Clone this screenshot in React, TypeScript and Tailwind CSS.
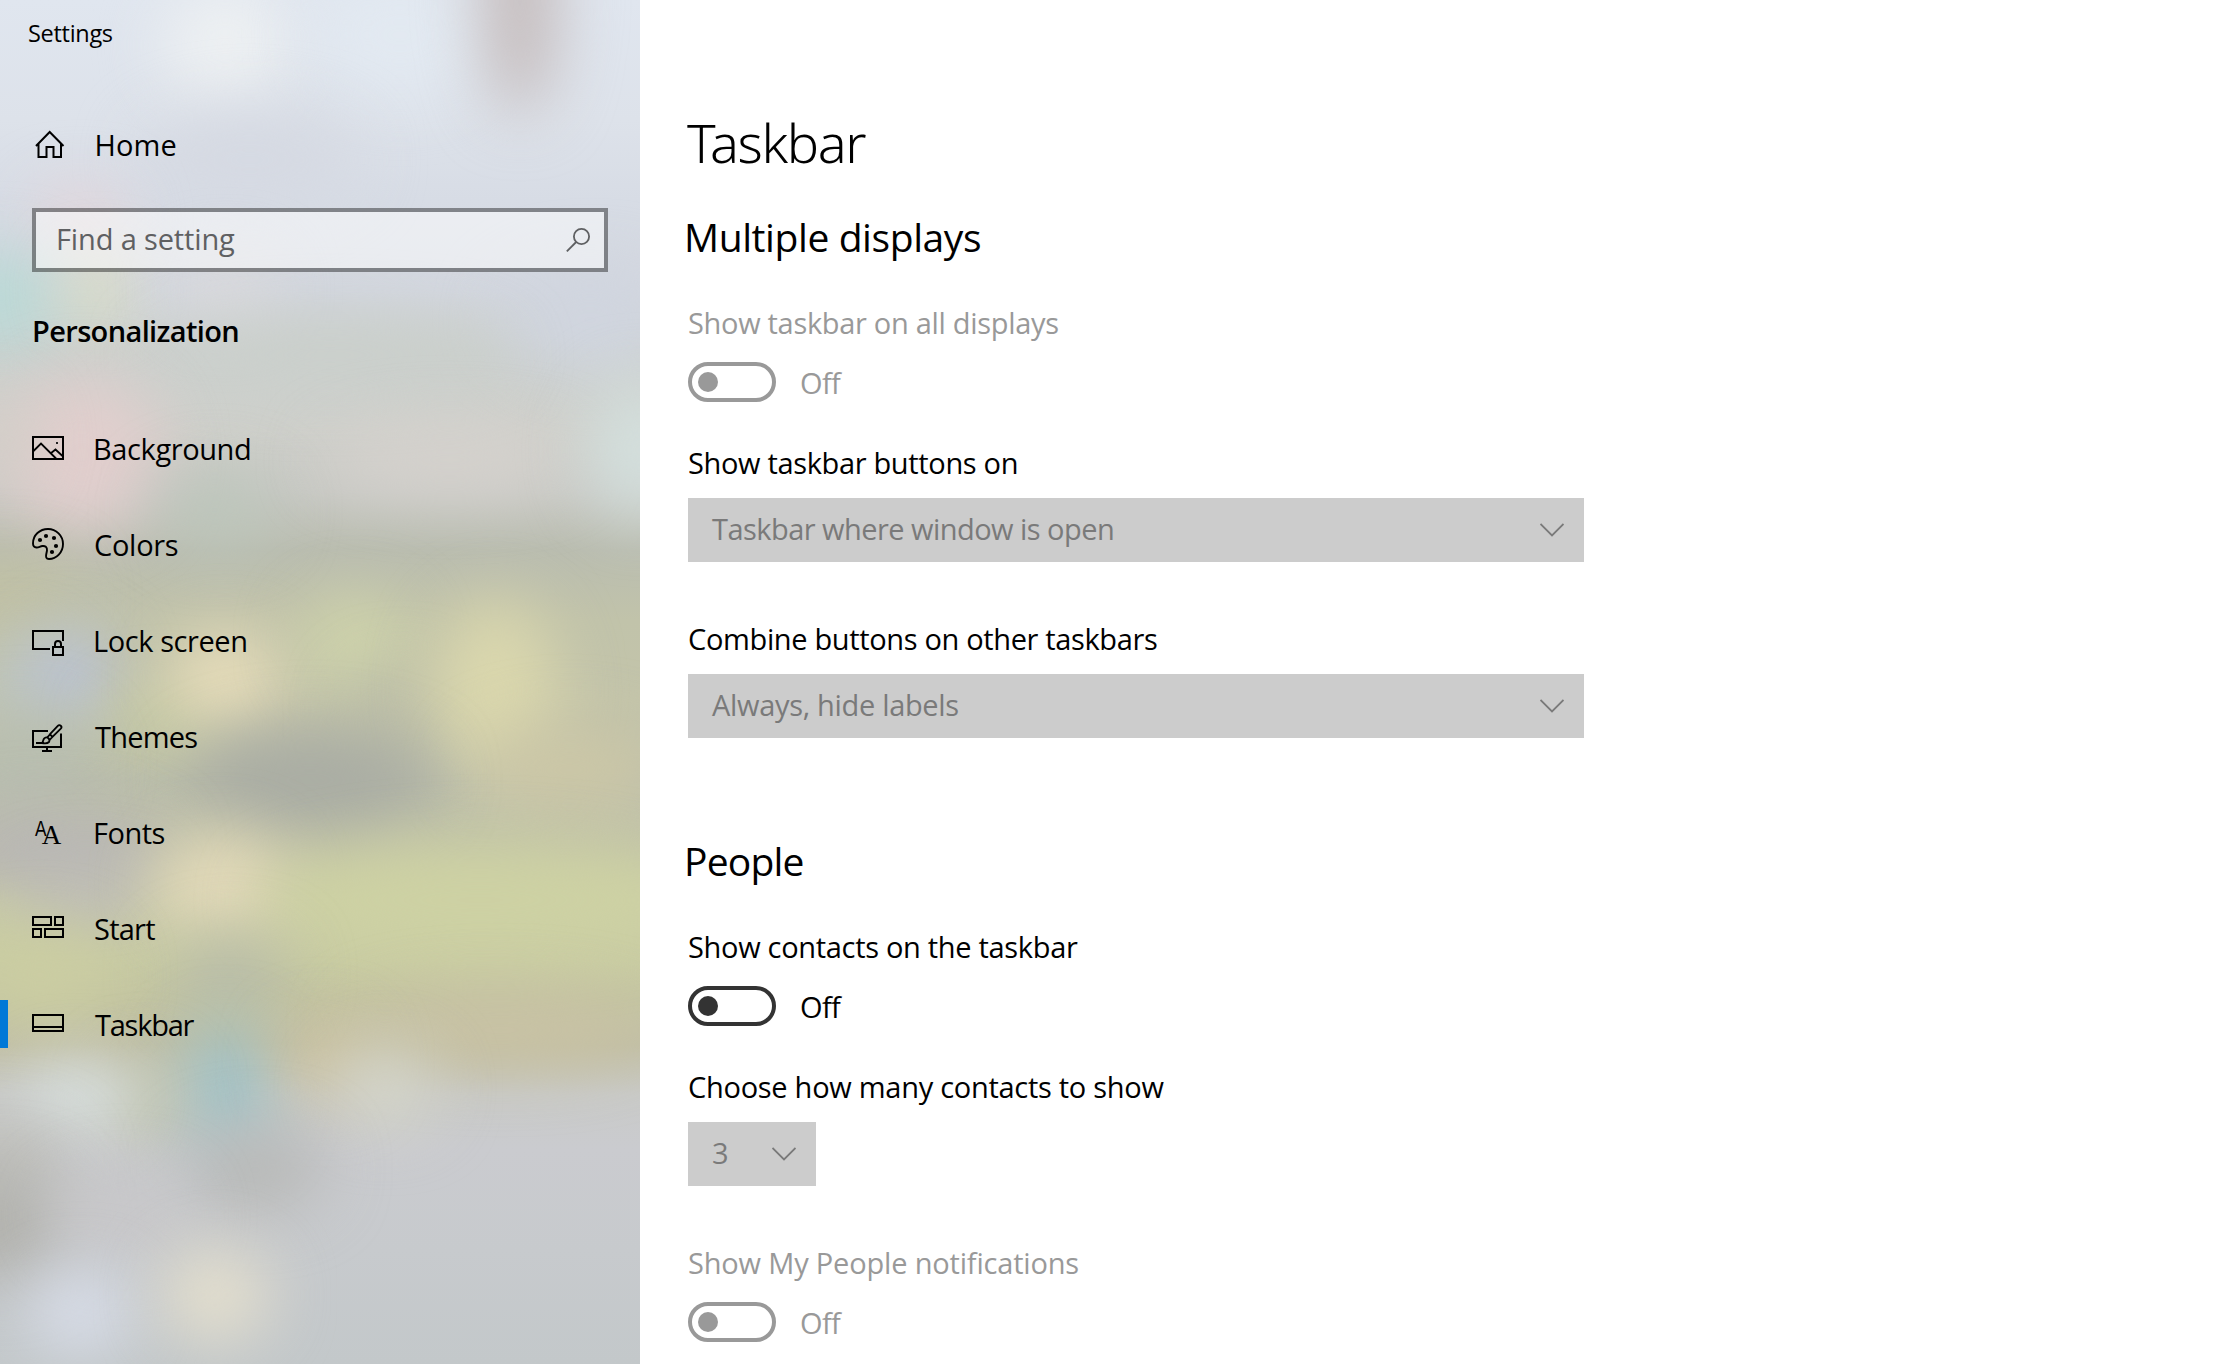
import type { ReactNode } from "react";

type Blob = [cx: number, cy: number, rx: number, ry: number, color: string];

const BACKDROP_STOPS: [number, string][] = [
  [0, "#e0e6ef"],
  [120, "#dde2ea"],
  [200, "#d7dce5"],
  [290, "#d3d7df"],
  [350, "#cdd1cf"],
  [430, "#cfd0cb"],
  [490, "#c8c9c4"],
  [550, "#babdb0"],
  [620, "#c1c3aa"],
  [700, "#c3c4aa"],
  [780, "#bbbeac"],
  [850, "#c3c5a8"],
  [900, "#cbcea6"],
  [960, "#c9cca3"],
  [1000, "#c4c5a2"],
  [1045, "#c1bfa6"],
  [1095, "#c9cac8"],
  [1150, "#cacbcf"],
  [1250, "#c7cacd"],
  [1364, "#c3c8ca"],
];

const BLOBS: Blob[] = [
  [225, 45, 64, 60, "#edf0f2"],
  [400, 35, 90, 60, "#e2e9f1"],
  [520, 0, 38, 115, "#c5bcbc"],
  [250, 160, 110, 50, "#d5d9e2"],
  [590, 320, 90, 50, "#d0d5df"],
  [80, 220, 46, 30, "#e6d5d9"],
  [0, 298, 65, 46, "#b9d9d5"],
  [98, 290, 32, 30, "#dbdeb8"],
  [225, 290, 50, 32, "#dbdadc"],
  [330, 355, 180, 34, "#cacfcb"],
  [82, 455, 80, 78, "#e1cecd"],
  [0, 440, 34, 44, "#d3cec8"],
  [215, 510, 60, 36, "#bcc6bb"],
  [450, 460, 130, 32, "#d6d2ce"],
  [640, 450, 54, 68, "#d3dfdd"],
  [5, 600, 70, 40, "#c1c1a4"],
  [20, 690, 50, 50, "#bfc6bb"],
  [70, 675, 46, 46, "#bac3d6"],
  [165, 725, 60, 30, "#c6cba3"],
  [225, 678, 56, 44, "#e9debb"],
  [355, 645, 54, 46, "#cfd4ab"],
  [400, 710, 50, 40, "#bcbea8"],
  [495, 690, 62, 90, "#dad7ad"],
  [570, 770, 100, 44, "#ccc7a6"],
  [20, 760, 70, 44, "#b8beb0"],
  [310, 780, 125, 48, "#a9aca3"],
  [50, 850, 120, 38, "#b7b5b6"],
  [85, 895, 70, 30, "#bdbbb9"],
  [220, 885, 64, 48, "#e4dabb"],
  [480, 900, 220, 52, "#cdd1a3"],
  [230, 975, 60, 38, "#b7bba9"],
  [40, 975, 70, 44, "#cbcda2"],
  [500, 1030, 150, 34, "#c9c2a4"],
  [225, 1088, 48, 62, "#a0c2c6"],
  [325, 1062, 42, 36, "#cfc4a0"],
  [145, 1100, 36, 40, "#c0c4a8"],
  [75, 1098, 54, 34, "#dae2df"],
  [385, 1088, 50, 38, "#d5d6ca"],
  [0, 1160, 70, 34, "#bfbfb8"],
  [0, 1225, 70, 56, "#b2b2ad"],
  [255, 1170, 70, 40, "#b7b8b6"],
  [120, 1215, 70, 40, "#c8c7c9"],
  [80, 1312, 54, 40, "#d9deea"],
  [215, 1295, 54, 46, "#e4dfcd"],
];

function Backdrop() {
  return (
    <svg className="absolute inset-0 h-full w-full" viewBox="0 0 640 1364" aria-hidden="true">
      <defs>
        <linearGradient id="base" x1="0" y1="0" x2="0" y2="1">
          {BACKDROP_STOPS.map(([y, color]) => (
            <stop key={y} offset={y / 1364} stopColor={color} />
          ))}
        </linearGradient>
        <filter id="soft" x="-200%" y="-200%" width="500%" height="500%" colorInterpolationFilters="sRGB">
          <feGaussianBlur stdDeviation="31" />
        </filter>
      </defs>
      <rect width="640" height="1364" fill="url(#base)" />
      {BLOBS.map(([cx, cy, rx, ry, color], i) => (
        <ellipse key={i} cx={cx} cy={cy} rx={rx} ry={ry} fill={color} filter="url(#soft)" />
      ))}
    </svg>
  );
}

function Icon({ children }: { children: ReactNode }) {
  return (
    <svg
      className="h-12 w-12 shrink-0"
      viewBox="0 0 48 48"
      fill="none"
      stroke="black"
      strokeWidth="2"
      aria-hidden="true"
    >
      {children}
    </svg>
  );
}

const HomeIcon = (
  <Icon>
    <path d="M12 26 25.7 12 39.5 26M14.5 24V37H22.5V27H29.5V37H37V24" />
  </Icon>
);
const PictureIcon = (
  <Icon>
    <rect x="9" y="13" width="30" height="22" />
    <path d="M9.5 27 17 19.5 32.5 35M26.5 29.5 31.5 25.5 38.5 32" strokeWidth="1.8" />
    <rect x="32" y="18" width="2" height="2" fill="#222" stroke="none" />
  </Icon>
);
const PaletteIcon = (
  <Icon>
    <path
      d="M9 23.5C9 15 15.8 9 24 9S39 15.8 39 24 32.5 39 25 39C22 39 21.7 37 22.2 34.5L23 30.5C23.4 27 21 25.7 18.5 26C16 26.3 14.5 27.8 12.5 27.5C10 27.2 9 26 9 23.5Z"
      strokeWidth="1.9"
    />
    <g fill="black" stroke="none">
      <circle cx="16" cy="20" r="2.1" />
      <circle cx="22" cy="16" r="2.1" />
      <circle cx="30" cy="18" r="2.1" />
      <circle cx="32" cy="26" r="2.1" />
      <circle cx="28" cy="32" r="2.1" />
    </g>
  </Icon>
);
const LockScreenIcon = (
  <Icon>
    <path d="M26 33H9V15H39V25" />
    <rect x="29" y="31" width="10" height="8" />
    <path d="M31 31V28a3 3 0 0 1 6 0V31" />
  </Icon>
);
const ThemesIcon = (
  <Icon>
    <path d="M24 19H9V35H37V21.5M23 35V39M18 39H28M12 31H20" />
    <path
      d="M26 22.2 33.8 13.8A2 2 0 0 1 36.8 16.7L28.4 25ZM26 22.2 23.2 25.6M28.4 25 25.4 28.2M18 31C19.6 30 18.6 27.2 20.6 26.1A3 3 0 0 1 25 30C23.2 31.8 20.4 31.5 18 31Z"
      strokeWidth="1.8"
    />
  </Icon>
);
const FontsIcon = (
  <Icon>
    <text fill="black" stroke="none">
      <tspan
        x="11"
        y="27.5"
        textLength="11.5"
        lengthAdjust="spacingAndGlyphs"
        className="font-['Liberation_Sans'] text-[22px]"
      >
        A
      </tspan>
      <tspan x="17.8" y="36" className="font-['Liberation_Serif'] text-[27px]">
        A
      </tspan>
    </text>
  </Icon>
);
const StartIcon = (
  <Icon>
    <rect x="9" y="13" width="18" height="8" />
    <rect x="31" y="13" width="8" height="8" />
    <rect x="9" y="25" width="8" height="8" />
    <rect x="21" y="25" width="18" height="8" />
  </Icon>
);
const TaskbarIcon = (
  <Icon>
    <path d="M9 15H39V31H9ZM9 27H39" />
  </Icon>
);

const NAV = [
  { label: "Background", icon: PictureIcon, text: "pl-[21px] tracking-[-0.4px]" },
  { label: "Colors", icon: PaletteIcon, text: "pl-[22px] tracking-[-0.3px]" },
  { label: "Lock screen", icon: LockScreenIcon, text: "pl-[21px] tracking-[-0.42px]" },
  { label: "Themes", icon: ThemesIcon, text: "pl-[23px] tracking-[-0.8px]" },
  { label: "Fonts", icon: FontsIcon, text: "pl-[21px] tracking-[-0.5px]" },
  { label: "Start", icon: StartIcon, text: "pl-[22px] tracking-[-0.75px]" },
  { label: "Taskbar", icon: TaskbarIcon, text: "pl-[23px] tracking-[-1.25px]", active: true },
];

function NavItem({
  label,
  icon,
  text,
  active = false,
}: {
  label: string;
  icon: ReactNode;
  text: string;
  active?: boolean;
}) {
  return (
    <a className="flex h-24 items-center">
      <span className={active ? "h-12 w-2 bg-[#0078d7]" : "h-12 w-2"} />
      <span className="ml-4 flex">{icon}</span>
      <span className={`pt-0.5 text-[29px] leading-10 whitespace-nowrap ${text}`}>{label}</span>
    </a>
  );
}

function Label({ children, className }: { children: string; className: string }) {
  return <div className={`h-10 text-[29px] leading-10 whitespace-nowrap ${className}`}>{children}</div>;
}

function Toggle({ disabled = false }: { disabled?: boolean }) {
  return (
    <div className={`mt-[19px] flex h-10 items-center ${disabled ? "text-[#999]" : "text-black"}`}>
      <div
        className={`flex h-10 w-[88px] items-center rounded-full border-4 pl-1.5 ${
          disabled ? "border-[#999]" : "border-[#333]"
        }`}
      >
        <div className={`size-5 rounded-full ${disabled ? "bg-[#999]" : "bg-[#333]"}`} />
      </div>
      <span className="ml-6 pt-0.5 text-[29px] leading-10 tracking-[-0.6px]">Off</span>
    </div>
  );
}

function Select({ children, width, text }: { children: string; width: string; text: string }) {
  return (
    <div className={`mt-[15px] flex h-16 items-center justify-between bg-[#ccc] pr-5 pl-6 text-[#7a7a7a] ${width}`}>
      <span className={`pb-0.5 text-[29px] leading-10 whitespace-nowrap ${text}`}>{children}</span>
      <svg className="h-4 w-6" viewBox="0 0 24 16" fill="none" stroke="#7a7a7a" strokeWidth="1.8" aria-hidden="true">
        <path d="M0.5 2 12 13.5 23.5 2" />
      </svg>
    </div>
  );
}

export default function App() {
  return (
    <div className="flex h-[1364px] w-[2228px] overflow-hidden bg-white font-['Open_Sans',sans-serif] text-black">
      <aside className="relative w-[640px] shrink-0 overflow-hidden">
        <Backdrop />
        <div className="relative flex flex-col">
          <div className="h-24 pt-[17px] pl-7 text-[23.5px] leading-8 tracking-[-0.3px]">Settings</div>
          <NavItem label="Home" icon={HomeIcon} text="pl-[22.5px] tracking-[0.1px]" />
          <div className="mx-8 mt-4 flex h-16 items-center justify-between border-4 border-black/40 bg-white/50 bg-clip-padding pr-3.5 pl-5">
            <span className="pb-0.5 text-[29px] leading-10 tracking-[-0.14px] text-[#5f6062]">Find a setting</span>
            <svg className="size-6" viewBox="0 0 24 24" fill="none" stroke="#5f6062" strokeWidth="1.8" aria-hidden="true">
              <circle cx="15.5" cy="8.5" r="7.6" />
              <path d="M10.2 14 0.8 23.4" />
            </svg>
          </div>
          <div className="mt-[39px] h-10 pl-8 text-[29px] leading-10 font-semibold tracking-[-0.64px]">
            Personalization
          </div>
          <nav className="mt-[49px] flex flex-col">
            {NAV.map((item) => (
              <NavItem key={item.label} {...item} />
            ))}
          </nav>
        </div>
      </aside>

      <main className="flex flex-1 flex-col items-start pt-[106px] pl-12">
        <h1 className="-ml-px h-[72px] font-['Noto_Sans',sans-serif] text-[54px] leading-[72px] font-light tracking-[-1.4px]">
          Taskbar
        </h1>

        <h2 className="mt-[33px] -ml-1 h-[52px] text-[39px] leading-[52px] tracking-[-0.41px]">Multiple displays</h2>
        <Label className="mt-10 tracking-[-0.31px] text-[#999]">Show taskbar on all displays</Label>
        <Toggle disabled />
        <Label className="mt-[41px] tracking-[-0.34px]">Show taskbar buttons on</Label>
        <Select width="w-[896px]" text="tracking-[-0.54px]">
          Taskbar where window is open
        </Select>
        <Label className="mt-[57px] tracking-[-0.35px]">Combine buttons on other taskbars</Label>
        <Select width="w-[896px]" text="tracking-[-0.32px]">
          Always, hide labels
        </Select>

        <h2 className="mt-[97px] -ml-1 h-[52px] text-[39px] leading-[52px] tracking-[-0.81px]">People</h2>
        <Label className="mt-10 tracking-[-0.31px]">Show contacts on the taskbar</Label>
        <Toggle />
        <Label className="mt-[41px] tracking-[-0.28px]">Choose how many contacts to show</Label>
        <Select width="w-32" text="">
          3
        </Select>
        <Label className="mt-[57px] tracking-[-0.18px] text-[#999]">Show My People notifications</Label>
        <Toggle disabled />
      </main>
    </div>
  );
}
